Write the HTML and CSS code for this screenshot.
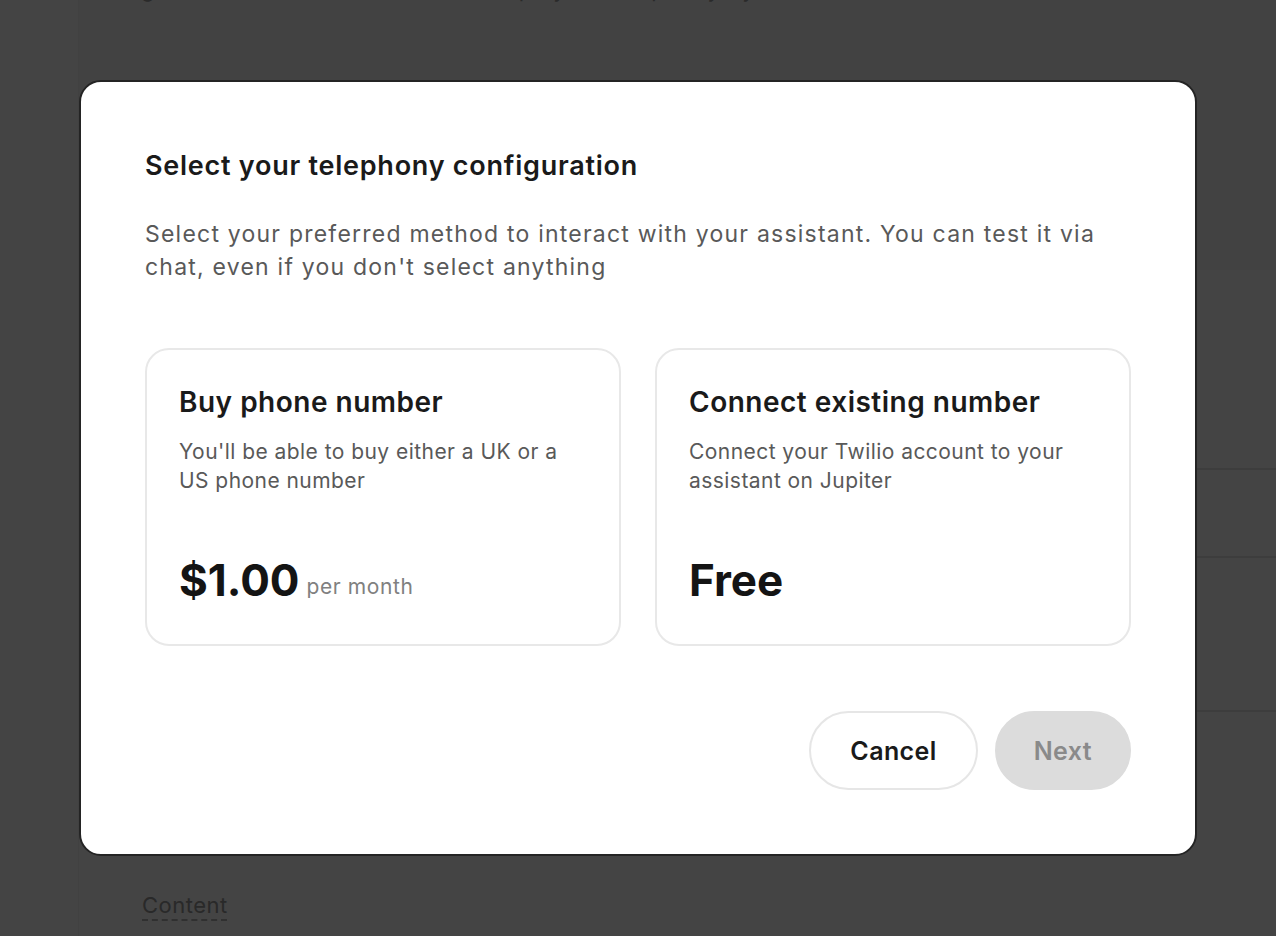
FILE: index.html
```html
<!DOCTYPE html>
<html lang="en">
<head>
<meta charset="utf-8">
<title>Select your telephony configuration</title>
<link rel="stylesheet" href="styles.css">
</head>
<body>
<div class="page">
  <aside class="sidebar"></aside>
  <main class="main">
    <section class="hero">
      <p class="hero-text">give the assistant a number to deploy on telephony by</p>
    </section>
    <section class="block block-a"></section>
    <section class="block block-b"></section>
    <section class="block block-c"></section>
    <section class="block block-d">
      <span class="content-link">Content</span>
    </section>
  </main>
</div>

<div class="overlay">
  <div class="modal" role="dialog" aria-labelledby="modal-title">
    <h2 class="modal-title" id="modal-title">Select your telephony configuration</h2>
    <p class="modal-subtitle">Select your preferred method to interact with your assistant. You can test it via chat, even if you don't select anything</p>
    <div class="options">
      <div class="option">
        <h3 class="option-title">Buy phone number</h3>
        <p class="option-desc">You'll be able to buy either a UK or a US phone number</p>
        <div class="option-price"><span class="price">$1.00</span><span class="price-unit">per month</span></div>
      </div>
      <div class="option">
        <h3 class="option-title">Connect existing number</h3>
        <p class="option-desc">Connect your Twilio account to your assistant on Jupiter</p>
        <div class="option-price"><span class="price">Free</span></div>
      </div>
    </div>
    <div class="actions">
      <button class="btn btn-cancel" type="button">Cancel</button>
      <button class="btn btn-next" type="button" disabled>Next</button>
    </div>
  </div>
</div>
</body>
</html>
```

FILE: styles.css
```css
* { box-sizing: border-box; }

html, body {
  margin: 0;
  padding: 0;
  height: 100%;
}

body {
  font-family: Inter, Lato, "Liberation Sans", sans-serif;
  background: #ffffff;
  overflow: hidden;
}

/* underlying page */
.page {
  display: flex;
  height: 936px;
}

.sidebar {
  width: 78px;
  flex: none;
  background: #ffffff;
}

.main {
  flex: 1;
  display: flex;
  flex-direction: column;
  border-left: 1px solid #f2f2f2;
}

.hero {
  height: 270px;
  background: #f7f7f7;
  padding-left: 62px;
}

.hero-text {
  margin: -24px 0 0;
  font-size: 22px;
  letter-spacing: 1px;
  color: #9d9d9d;
  white-space: nowrap;
}

.block {
  border-top: 2px solid #e4e4e4;
}

.block-a { height: 198px; border-top: none; }
.block-b { height: 88px; }
.block-c { height: 154px; }
.block-d {
  flex: 1;
  padding: 180px 0 0 63px;
  background: #fdfdfd;
}

.content-link {
  font-size: 22px;
  letter-spacing: 0.5px;
  color: #9a9a9a;
  text-decoration: underline dashed #b5b5b5;
  text-underline-offset: 6px;
}

/* overlay + modal */
.overlay {
  position: fixed;
  inset: 0;
  background: rgba(0, 0, 0, 0.733);
  display: flex;
  align-items: center;
  justify-content: center;
}

.modal {
  width: 1118px;
  background: #ffffff;
  border: 2px solid #242424;
  border-radius: 22px;
  padding: 67px 64px 64px;
  color: #1a1a1a;
}

.modal-title {
  margin: 0;
  font-size: 27px;
  line-height: 34px;
  font-weight: 600;
  letter-spacing: 0.75px;
  color: #1a1a1a;
}

.modal-subtitle {
  margin: 35px 0 0;
  font-size: 23px;
  line-height: 33px;
  letter-spacing: 1.22px;
  color: #595959;
  font-weight: 400;
}

.options {
  display: grid;
  grid-template-columns: 1fr 1fr;
  gap: 34px;
  margin-top: 64px;
}

.option {
  border: 2px solid #e8e8e8;
  border-radius: 24px;
  padding: 32px;
}

.option-title {
  margin: 0;
  font-size: 28px;
  line-height: 40px;
  font-weight: 600;
  letter-spacing: 0.5px;
  color: #1a1a1a;
}

.option-desc {
  margin: 15px 0 0;
  max-width: 396px;
  font-size: 21px;
  line-height: 29px;
  letter-spacing: 0.45px;
  color: #595959;
}

.option-price {
  margin-top: 53px;
  line-height: 64px;
  height: 64px;
  white-space: nowrap;
}

.price {
  font-size: 44px;
  font-weight: 700;
  color: #141414;
}

.price-unit {
  margin-left: 7px;
  font-size: 21px;
  letter-spacing: 0.6px;
  color: #808080;
  vertical-align: 2px;
}

.actions {
  display: flex;
  justify-content: flex-end;
  gap: 17px;
  margin-top: 65px;
}

.btn {
  height: 79px;
  border-radius: 40px;
  font-family: inherit;
  font-size: 25px;
  font-weight: 600;
  letter-spacing: 0.4px;
  cursor: pointer;
}

.btn-cancel {
  padding: 0 39px;
  background: #ffffff;
  border: 2px solid #e6e6e6;
  color: #1a1a1a;
}

.btn-next {
  padding: 0 37px;
  background: #dcdcdc;
  border: 2px solid #dcdcdc;
  color: #8a8a8a;
  cursor: default;
}
```
